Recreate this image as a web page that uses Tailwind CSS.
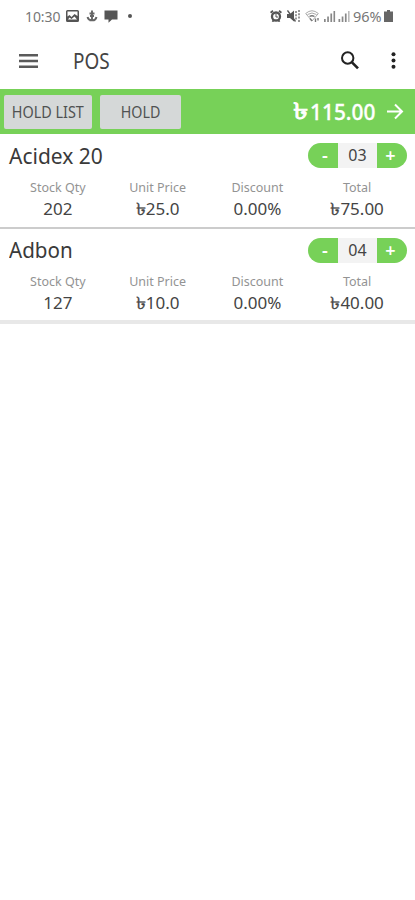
<!DOCTYPE html>
<html lang="en">
<head>
<meta charset="utf-8">
<title>POS</title>
<script src="https://cdn.jsdelivr.net/npm/@tailwindcss/browser@4"></script>
</head>
<body class="w-[415px] h-[900px] overflow-hidden bg-white font-['Noto_Sans',sans-serif] text-[#444]">
<div class="flex h-8 items-center pl-[25px] pr-[22px] text-[#777]">
  <span class="w-[41px] text-[14px] tracking-[-0.1px]">10:30</span>
  <svg class="w-[13px] h-3" viewBox="0 0 13 12"><path fill="#555" fill-rule="evenodd" d="M1.5 0h10Q13 0 13 1.500v9Q13 12 11.500 12h-10Q0 12 0 10.500v-9Q0 0 1.500 0zM1.500 1.500v5l2-1.500 2 2 3-3 3 2V1.500zM2 9.500h9L8.500 6.500l-3 2.500-2-1.500z"/></svg>
  <svg class="ml-[7px] w-3 h-3" viewBox="0 0 12 12" fill="none" stroke="#666" stroke-width="1.900"><path d="M6 .5v10.500M3.500 3.500h5M1.500 7c1 4 8 5 9 0M4 6h4M3.500 10.300h5"/></svg>
  <svg class="ml-[6px] w-[14px] h-[13px]" viewBox="0 0 14 13"><path fill="#555" d="M.5.5h13v9H8L4.500 12.800V9.500h-4z"/></svg>
  <i class="ml-[10px] size-[4px] rounded-full bg-[#555]"></i>
  <span class="flex-1"></span>
  <svg class="w-3 h-3 shrink-0" viewBox="0 0 12 12" fill="none" stroke="#555"><circle cx="6" cy="6.500" r="4" stroke-width="2.300"/><path stroke-width="1.800" d="M.6 2.800 3 .8M11.400 2.800 9 .8M2.500 11.800l1-1.500M9.500 11.800l-1-1.500"/><path d="M6 4v3h2"/></svg>
  <svg class="ml-[5px] w-[13px] h-3 shrink-0" viewBox="0 0 13 12"><path fill="#555" d="M0 4h3l4-3.500v11L3 8H0z"/><path stroke="#555" stroke-width="1.300" fill="none" d="M.5.5l8 11"/><path stroke="#777" stroke-width="1.500" stroke-dasharray="2 1.300" d="M9 1v10M12 0v12"/></svg>
  <svg class="ml-[5px] w-[15px] h-3 shrink-0" viewBox="0 0 15 12" fill="none" stroke="#aaa"><path d="M.7 3.500Q7-2 13.300 3.500L7 11zM2.500 4.500Q7 1.500 11.500 4.500"/><path stroke="#777" stroke-width="1.400" d="M4.500 6.500Q7 5 9.500 6.500M7 11 5 8.500M10.500 12V8.500M13 8v2.500"/></svg>
  <svg class="ml-[4px] w-[27px] h-3 shrink-0" viewBox="0 0 27 12"><path fill="#888" d="M0 9h1.700v3H0zM3.200 6.500h1.700V12H3.200zM6.400 3.500h1.700V12H6.400zM9.500 1h1.600v11H9.500zM14.500 9h1.700v3h-1.700zM17.700 6.500h1.700V12h-1.700zM20.900 3.500h1.700V12h-1.700z"/><path fill="#bbb" d="M24 1h1.600v11H24z"/></svg>
  <span class="ml-[2px] w-[31px] whitespace-nowrap pt-px text-[14.5px]"><span class="inline-block origin-left">96%</span></span>
  <svg class="w-[9px] h-3 shrink-0" viewBox="0 0 9 12"><path fill="#666" d="M3 0h3v1.500h3V12H0V1.500h3z"/></svg>
</div>
<header class="flex h-[57px] items-center pl-[19px] pr-[19px]">
  <svg class="w-[19px] h-[14px]" viewBox="0 0 19 14"><path fill="#5a5a5a" d="M0 0h19v2.400H0zM0 5.800h19v2.400H0zM0 11.600h19V14H0z"/></svg>
  <h1 class="ml-[35px] mt-[1px] origin-left scale-x-[0.88] text-[21.5px] leading-7">POS</h1>
  <span class="flex-1"></span>
  <svg class="w-[19px] h-[19px]" viewBox="0 0 19 19" fill="none" stroke="#222"><circle cx="7.700" cy="7" r="5.700" stroke-width="2"/><path stroke-width="2.600" d="m12 11.300 6 6"/></svg>
  <svg class="ml-[32px] w-[5px] h-[17px]" viewBox="0 0 5 17" fill="#222"><circle cx="2.500" cy="2.200" r="2"/><circle cx="2.500" cy="8.500" r="2"/><circle cx="2.500" cy="14.800" r="2"/></svg>
</header>
<div class="flex h-[45px] items-center bg-[#77d158] pl-1 pr-[11px]">
  <button class="flex h-[34px] w-[88px] items-center justify-center rounded-[2px] bg-[#d5d8d8] text-[15.5px] text-[#505252]"><span class="mt-[2px] scale-x-[0.93] whitespace-nowrap">HOLD LIST</span></button>
  <button class="ml-2 flex h-[34px] w-[81px] items-center justify-center rounded-[2px] bg-[#d5d8d8] text-[15.5px] text-[#505252]"><span class="mt-[2px] scale-x-[0.92]">HOLD</span></button>
  <span class="ml-auto flex items-center whitespace-nowrap font-medium leading-[30px] text-white"><span class="mb-[3px] inline-block origin-right scale-x-[1.35] text-[23px] [-webkit-text-stroke:0.8px_white]">৳</span><span class="inline-block origin-right scale-x-[0.97] text-[21.5px] [-webkit-text-stroke:0.3px_white]">115.00</span></span>
  <svg class="ml-[12px] w-[17px] h-[17px]" viewBox="0 0 17 17" fill="none" stroke="#fff" stroke-width="2"><path d="M0 8.500h15M8 1.500l7 7-7 7"/></svg>
</div>
<main>
  <section class="h-[95px] border-b-2 border-[#ccc]">
    <div class="flex h-[43px] items-center justify-between pl-[9px] pr-2">
      <h2 class="mt-[2px] origin-left text-[21px] text-[#3a3a3a]">Acidex 20</h2>
      <div class="flex h-[25px] w-[99px] overflow-hidden rounded-full bg-[#f3f3f3] text-center leading-[25px]">
        <span class="w-[30px] bg-[#77d158] pl-[4px] text-[18px] font-semibold text-white">-</span><span class="flex-1 text-[16px]">03</span><span class="w-[30px] bg-[#77d158] pr-[3px] text-[18px] font-semibold text-white">+</span>
      </div>
    </div>
    <div class="grid grid-cols-4 px-2 text-center">
      <div><p class="mt-[2px] text-[12.500px] leading-[18px] text-[#939393]">Stock Qty</p><p class="text-[17px] leading-[23px]">202</p></div>
      <div><p class="mt-[2px] text-[12.500px] leading-[18px] text-[#939393]">Unit Price</p><p class="pl-[2px] text-[17px] leading-[23px]"><span class="inline-block origin-right scale-x-[1.2] leading-none [-webkit-text-stroke:0.3px_#444]">৳</span>25.0</p></div>
      <div><p class="mt-[2px] text-[12.500px] leading-[18px] text-[#939393]">Discount</p><p class="text-[17px] leading-[23px]">0.00%</p></div>
      <div><p class="mt-[2px] text-[12.500px] leading-[18px] text-[#939393]">Total</p><p class="pl-[2px] text-[17px] leading-[23px]"><span class="inline-block origin-right scale-x-[1.2] leading-none [-webkit-text-stroke:0.3px_#444]">৳</span>75.00</p></div>
    </div>
  </section>
  <section class="h-[95px] border-b-4 border-[#e8e8e8]">
    <div class="flex h-[42px] items-center justify-between pl-[9px] pr-2">
      <h2 class="mt-[2px] origin-left scale-x-[0.98] text-[21px] text-[#3a3a3a]">Adbon</h2>
      <div class="flex h-[25px] w-[99px] overflow-hidden rounded-full bg-[#f3f3f3] text-center leading-[25px]">
        <span class="w-[30px] bg-[#77d158] pl-[4px] text-[18px] font-semibold text-white">-</span><span class="flex-1 text-[16px]">04</span><span class="w-[30px] bg-[#77d158] pr-[3px] text-[18px] font-semibold text-white">+</span>
      </div>
    </div>
    <div class="grid grid-cols-4 px-2 text-center">
      <div><p class="mt-[2px] text-[12.500px] leading-[18px] text-[#939393]">Stock Qty</p><p class="text-[17px] leading-[23px]">127</p></div>
      <div><p class="mt-[2px] text-[12.500px] leading-[18px] text-[#939393]">Unit Price</p><p class="pl-[2px] text-[17px] leading-[23px]"><span class="inline-block origin-right scale-x-[1.2] leading-none [-webkit-text-stroke:0.3px_#444]">৳</span>10.0</p></div>
      <div><p class="mt-[2px] text-[12.500px] leading-[18px] text-[#939393]">Discount</p><p class="text-[17px] leading-[23px]">0.00%</p></div>
      <div><p class="mt-[2px] text-[12.500px] leading-[18px] text-[#939393]">Total</p><p class="pl-[2px] text-[17px] leading-[23px]"><span class="inline-block origin-right scale-x-[1.2] leading-none [-webkit-text-stroke:0.3px_#444]">৳</span>40.00</p></div>
    </div>
  </section>
</main>
</body>
</html>
